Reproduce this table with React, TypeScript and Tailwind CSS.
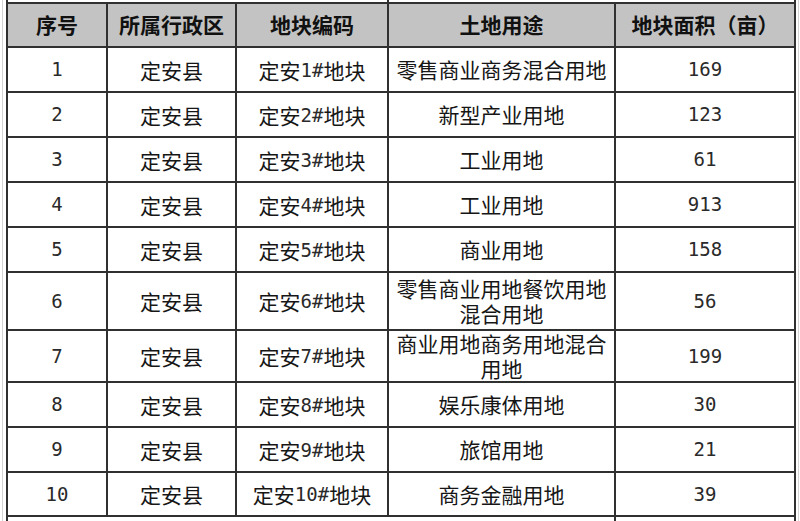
import React from "react";

const rows: [string, string, string, string[], string][] = [
  ["1", "定安县", "定安1#地块", ["零售商业商务混合用地"], "169"],
  ["2", "定安县", "定安2#地块", ["新型产业用地"], "123"],
  ["3", "定安县", "定安3#地块", ["工业用地"], "61"],
  ["4", "定安县", "定安4#地块", ["工业用地"], "913"],
  ["5", "定安县", "定安5#地块", ["商业用地"], "158"],
  ["6", "定安县", "定安6#地块", ["零售商业用地餐饮用地", "混合用地"], "56"],
  ["7", "定安县", "定安7#地块", ["商业用地商务用地混合", "用地"], "199"],
  ["8", "定安县", "定安8#地块", ["娱乐康体用地"], "30"],
  ["9", "定安县", "定安9#地块", ["旅馆用地"], "21"],
  ["10", "定安县", "定安10#地块", ["商务金融用地"], "39"],
];

const heights = ["h-[43px]", "h-[43px]", "h-[43px]", "h-[43px]", "h-[43px]", "h-[56px]", "h-[50px]", "h-[43px]", "h-[43px]", "h-[42px]"];

function Mixed({ text }: { text: string }) {
  const parts = text.match(/[\x00-\x7f]+|[^\x00-\x7f]+/g) || [];
  return (
    <>
      {parts.map((p, i) =>
        /^[\x00-\x7f]+$/.test(p) ? (
          <span key={i} className="font-['DejaVu_Sans_Mono',monospace] text-[19px] text-[#2a2a2a]">
            {p}
          </span>
        ) : (
          <span key={i}>{p}</span>
        )
      )}
    </>
  );
}

const cell = "bg-white flex items-center justify-center text-center";
const cjk = "font-['Noto_Sans_CJK_SC',sans-serif] text-[21px] text-[#161616] leading-[24px]";
const num = "font-['DejaVu_Sans_Mono',monospace] text-[19px] text-[#2a2a2a]";
const head = "bg-[#c3c3c3] flex items-center justify-center font-['Noto_Sans_CJK_SC',sans-serif] font-bold text-[21px] text-[#111]";

export default function App() {
  return (
    <div className="w-[800px] h-[521px] overflow-hidden bg-white pl-[2px]">
      <div className="h-full border-l border-[#d4d4d4] pl-[3px] w-[797px] border-r">
        <div className="grid grid-cols-[98px_127px_150px_225px_178px] gap-[2px] bg-[#303030] px-[2px] w-[790px]">
          <div className="col-span-3 bg-white h-[2px]" />
          <div className="col-span-2 bg-white h-[2px]" />
          <div className={`${head} h-[42px]`}>序号</div>
          <div className={head}>所属行政区</div>
          <div className={head}>地块编码</div>
          <div className={head}>土地用途</div>
          <div className={head}>地块面积（亩）</div>
          {rows.map((r, i) => (
            <React.Fragment key={i}>
              <div className={`${cell} ${num} ${heights[i]}`}>{r[0]}</div>
              <div className={`${cell} ${cjk}`}>{r[1]}</div>
              <div className={`${cell} ${cjk}`}>
                <Mixed text={r[2]} />
              </div>
              <div className={`${cell} ${cjk}`}>
                <div className="leading-[25px]">
                  {r[3].map((l, j) => (
                    <div key={j}>{l}</div>
                  ))}
                </div>
              </div>
              <div className={`${cell} ${num}`}>{r[4]}</div>
            </React.Fragment>
          ))}
          <div className="col-span-4 bg-white h-[20px]" />
          <div className="bg-white h-[20px]" />
        </div>
      </div>
    </div>
  );
}
